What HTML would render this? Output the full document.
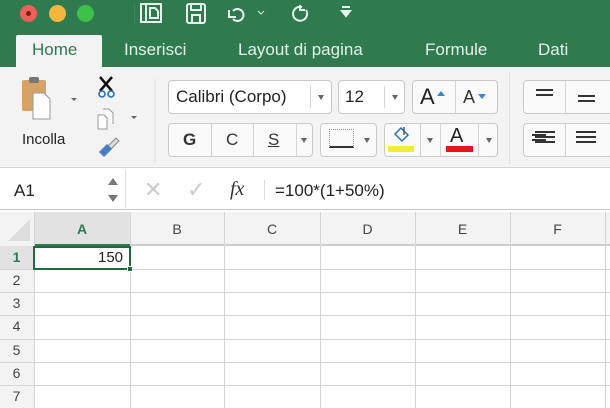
<!DOCTYPE html><html><head><style>
*{margin:0;padding:0;box-sizing:border-box}
body{width:610px;height:408px;overflow:hidden;background:#fff;font-family:"Liberation Sans",sans-serif;position:relative}
.a{position:absolute}
.g{background:#2f7a4f}
.tab{color:#e6f1ea;font-size:17px;top:40px}
.box{position:absolute;background:#fafafa;border:1px solid #c9c9c9;border-radius:4px}
.tri{position:absolute;width:0;height:0;border-left:3px solid transparent;border-right:3px solid transparent;border-top:5px solid #666}
.vl{position:absolute;width:1px;background:#d4d4d4}
.col{position:absolute;top:213px;height:33px;line-height:33px;text-align:center;font-size:14px;color:#444}
.row{position:absolute;left:0;width:33px;text-align:center;font-size:14px;color:#444}
</style></head><body>
<div class="a g" style="left:0;top:0;width:610px;height:67px"></div>
<div class="a" style="left:20px;top:5px;width:17px;height:17px;border-radius:50%;background:#ed5f5a"></div>
<div class="a" style="left:26px;top:11px;width:5px;height:5px;border-radius:50%;background:#7d1a16"></div>
<div class="a" style="left:49px;top:5px;width:17px;height:17px;border-radius:50%;background:#f6b63d"></div>
<div class="a" style="left:77px;top:5px;width:17px;height:17px;border-radius:50%;background:#3cc24a"></div>
<div class="a" style="left:134px;top:4px;width:1px;height:20px;background:#3e8a5e"></div>
<svg class="a" style="left:0;top:0" width="360" height="30" fill="none" stroke="#e8f1eb" stroke-width="2">
<rect x="141" y="4" width="20" height="18"/><line x1="146" y1="4" x2="146" y2="22"/><path d="M150 8h5l3 3v7h-8z"/>
<rect x="187" y="4" width="18" height="19" rx="2"/><rect x="191" y="4" width="10" height="6"/><rect x="192" y="15" width="8" height="8"/>
<path d="M233 11a6 6 0 1 1 0 8M229 10v7h7"/><path d="M264 11l-3 3-3-3" stroke-width="1"/>
<path d="M302 7a7 7 0 1 0 4 3M300 5v5h5"/>
<path d="M342 7h8M342 11l4 5 4-5z" fill="#e8f1eb"/>
</svg>
<div class="a" style="left:16px;top:35px;width:86px;height:33px;background:#f3f3f3;border-radius:2px 2px 0 0"></div>
<div class="a tab" style="left:32px;color:#2f7a4f">Home</div>
<div class="a tab" style="left:124px">Inserisci</div>
<div class="a tab" style="left:238px">Layout di pagina</div>
<div class="a tab" style="left:425px">Formule</div>
<div class="a tab" style="left:538px">Dati</div>
<div class="a" style="left:0;top:67px;width:610px;height:101px;background:#f3f3f3;border-bottom:1px solid #d6d6d6"></div>
<svg class="a" style="left:0;top:67px" width="160" height="100">
<rect x="22" y="13" width="24" height="31" rx="2" fill="#d7a266"/><rect x="29" y="10" width="10" height="6" rx="2" fill="#777"/>
<path d="M33 26h11l6 6v20h-17z" fill="#fff" stroke="#999"/>
<path d="M71 31l3 3 3-3z" fill="#666"/>
<path d="M100 10l12 14M112 10l-12 14" stroke="#111" stroke-width="2.5"/><circle cx="102" cy="27" r="3" fill="none" stroke="#2a6fc0" stroke-width="1.6"/><circle cx="111" cy="27" r="3" fill="none" stroke="#2a6fc0" stroke-width="1.6"/>
<path d="M98 48h6l3 3v11h-9zM103 42h6l4 4v11" fill="#fff" stroke="#999"/>
<path d="M131 49l3 3 3-3z" fill="#666"/>
<path d="M108 79l8-8 3 3-8 8z" fill="#ddd" stroke="#888"/><path d="M99 85l8-8 5 5-8 8z" fill="#4a7dc4"/>
<line x1="155" y1="12" x2="155" y2="96" stroke="#ddd"/>
</svg>
<div class="a" style="left:22px;top:131px;font-size:15px;color:#222">Incolla</div>
<div class="box" style="left:168px;top:80px;width:164px;height:34px;background:#fff"></div>
<div class="a" style="left:176px;top:87px;font-size:17px;color:#222">Calibri (Corpo)</div>
<div class="vl" style="left:310px;top:86px;height:22px"></div><div class="tri" style="left:318px;top:95px"></div>
<div class="box" style="left:338px;top:80px;width:67px;height:34px;background:#fff"></div>
<div class="a" style="left:345px;top:87px;font-size:17px;color:#222">12</div>
<div class="vl" style="left:384px;top:86px;height:22px"></div><div class="tri" style="left:392px;top:95px"></div>
<div class="box" style="left:412px;top:80px;width:86px;height:34px"></div>
<div class="vl" style="left:455px;top:81px;height:32px"></div>
<div class="a" style="left:420px;top:84px;font-size:22px;color:#222">A</div>
<div class="a" style="left:437px;top:91px;border:4px solid transparent;border-bottom:5px solid #3b86d0;border-top:0"></div>
<div class="a" style="left:463px;top:87px;font-size:18px;color:#333">A</div>
<div class="a" style="left:478px;top:94px;border:4px solid transparent;border-top:5px solid #3b86d0;border-bottom:0"></div>
<div class="box" style="left:168px;top:123px;width:145px;height:34px"></div>
<div class="vl" style="left:211px;top:124px;height:32px"></div><div class="vl" style="left:253px;top:124px;height:32px"></div><div class="vl" style="left:296px;top:124px;height:32px"></div>
<div class="a" style="left:183px;top:130px;font-size:17px;font-weight:bold;color:#333">G</div>
<div class="a" style="left:226px;top:130px;font-size:17px;color:#333">C</div>
<div class="a" style="left:268px;top:130px;font-size:17px;color:#333;text-decoration:underline">S</div>
<div class="tri" style="left:301px;top:138px"></div>
<div class="box" style="left:320px;top:123px;width:57px;height:34px"></div>
<div class="a" style="left:329px;top:129px;width:25px;height:19px;border:1px dotted #999;border-bottom:2px solid #333"></div>
<div class="tri" style="left:364px;top:138px"></div>
<div class="box" style="left:384px;top:123px;width:114px;height:34px"></div>
<div class="vl" style="left:420px;top:124px;height:32px"></div><div class="vl" style="left:440px;top:124px;height:32px"></div><div class="vl" style="left:478px;top:124px;height:32px"></div>
<div class="a" style="left:388px;top:146px;width:26px;height:6px;background:#f4ec3a"></div>
<svg class="a" style="left:390px;top:125px" width="24" height="20"><path d="M5 9l6-6 7 7-6 6z" fill="#fff" stroke="#2a6fc0" stroke-width="1.5"/><path d="M14 2v8" stroke="#555" stroke-width="1.5"/></svg>
<div class="tri" style="left:427px;top:138px"></div>
<div class="a" style="left:450px;top:125px;font-size:20px;color:#222">A</div>
<div class="a" style="left:446px;top:146px;width:27px;height:6px;background:#e3161d"></div>
<div class="tri" style="left:486px;top:138px"></div>
<div class="a" style="left:509px;top:72px;width:1px;height:92px;background:#ddd"></div>
<div class="box" style="left:523px;top:80px;width:90px;height:34px"></div>
<div class="vl" style="left:565px;top:81px;height:32px"></div>
<div class="a" style="left:536px;top:89px;width:17px;height:2px;background:#333;box-shadow:0 5px 0 #333"></div>
<div class="a" style="left:578px;top:95px;width:17px;height:2px;background:#333;box-shadow:0 5px 0 #333"></div>
<div class="box" style="left:523px;top:123px;width:90px;height:34px"></div>
<div class="vl" style="left:565px;top:124px;height:32px"></div>
<div class="a" style="left:535px;top:131px;width:20px;height:2px;background:#333;box-shadow:0 5px 0 #333,0 10px 0 #333"></div>
<div class="a" style="left:532px;top:134px;width:14px;height:2px;background:#333;box-shadow:0 5px 0 #333"></div>
<div class="a" style="left:576px;top:131px;width:20px;height:2px;background:#333;box-shadow:0 5px 0 #333,0 10px 0 #333"></div>
<div class="a" style="left:0;top:170px;width:610px;height:40px;background:#fff;border-bottom:1px solid #c8c8c8"></div>
<div class="a" style="left:125px;top:170px;width:1px;height:40px;background:#ddd"></div>
<div class="a" style="left:14px;top:181px;font-size:17px;color:#222">A1</div>
<div class="a" style="left:108px;top:178px;border:5px solid transparent;border-bottom:7px solid #777;border-top:0"></div>
<div class="a" style="left:108px;top:195px;border:5px solid transparent;border-top:7px solid #777;border-bottom:0"></div>
<div class="a" style="left:144px;top:177px;font-size:22px;color:#ccc">✕</div>
<div class="a" style="left:187px;top:177px;font-size:22px;color:#ccc">✓</div>
<div class="a" style="left:230px;top:178px;font-size:20px;font-style:italic;font-family:'Liberation Serif',serif;color:#333">fx</div>
<div class="a" style="left:264px;top:180px;width:1px;height:20px;background:#ddd"></div>
<div class="a" style="left:275px;top:181px;font-size:17px;color:#222">=100*(1+50%)</div>
<div class="a" style="left:0;top:212px;width:610px;height:34px;background:#f3f3f3;border-bottom:2px solid #ccc"></div>
<div class="a" style="left:0;top:212px;width:34px;height:196px;background:#f3f3f3"></div>
<div class="a" style="left:8px;top:219px;border-left:22px solid transparent;border-bottom:22px solid #ddd"></div>
<div class="a" style="left:34px;top:212px;width:96px;height:34px;background:#e2e2e2;border-bottom:2px solid #2f7a4f"></div>
<div class="col" style="left:34px;width:96px;color:#2f7a4f;font-weight:bold">A</div>
<div class="col" style="left:130px;width:94px">B</div>
<div class="col" style="left:224px;width:96px">C</div>
<div class="col" style="left:320px;width:95px">D</div>
<div class="col" style="left:415px;width:95px">E</div>
<div class="col" style="left:510px;width:95px">F</div>
<svg class="a" style="left:0;top:212px" width="610" height="196" stroke="#d4d4d4">
<g><line x1="34.5" y1="0" x2="34.5" y2="196"/><line x1="130.5" y1="0" x2="130.5" y2="196"/><line x1="224.5" y1="0" x2="224.5" y2="196"/><line x1="320.5" y1="0" x2="320.5" y2="196"/><line x1="415.5" y1="0" x2="415.5" y2="196"/><line x1="510.5" y1="0" x2="510.5" y2="196"/><line x1="605.5" y1="0" x2="605.5" y2="196"/></g>
<g><line x1="0" y1="57.5" x2="610" y2="57.5"/><line x1="0" y1="80.5" x2="610" y2="80.5"/><line x1="0" y1="103.5" x2="610" y2="103.5"/><line x1="0" y1="127.5" x2="610" y2="127.5"/><line x1="0" y1="150.5" x2="610" y2="150.5"/><line x1="0" y1="173.5" x2="610" y2="173.5"/></g>
</svg>
<div class="a" style="left:0;top:246px;width:34px;height:23px;background:#e2e2e2"></div>
<div class="row" style="top:249px;color:#2f7a4f;font-weight:bold">1</div>
<div class="row" style="top:272px">2</div><div class="row" style="top:295px">3</div><div class="row" style="top:318px">4</div><div class="row" style="top:342px">5</div><div class="row" style="top:365px">6</div><div class="row" style="top:388px">7</div>
<div class="a" style="left:33px;top:246px;width:98px;height:24px;border:2px solid #1f6b3f"></div>
<div class="a" style="left:127px;top:266px;width:6px;height:6px;background:#1f6b3f;border:1px solid #fff"></div>
<div class="a" style="left:98px;top:249px;font-size:15px;color:#222">150</div>
</body></html>
